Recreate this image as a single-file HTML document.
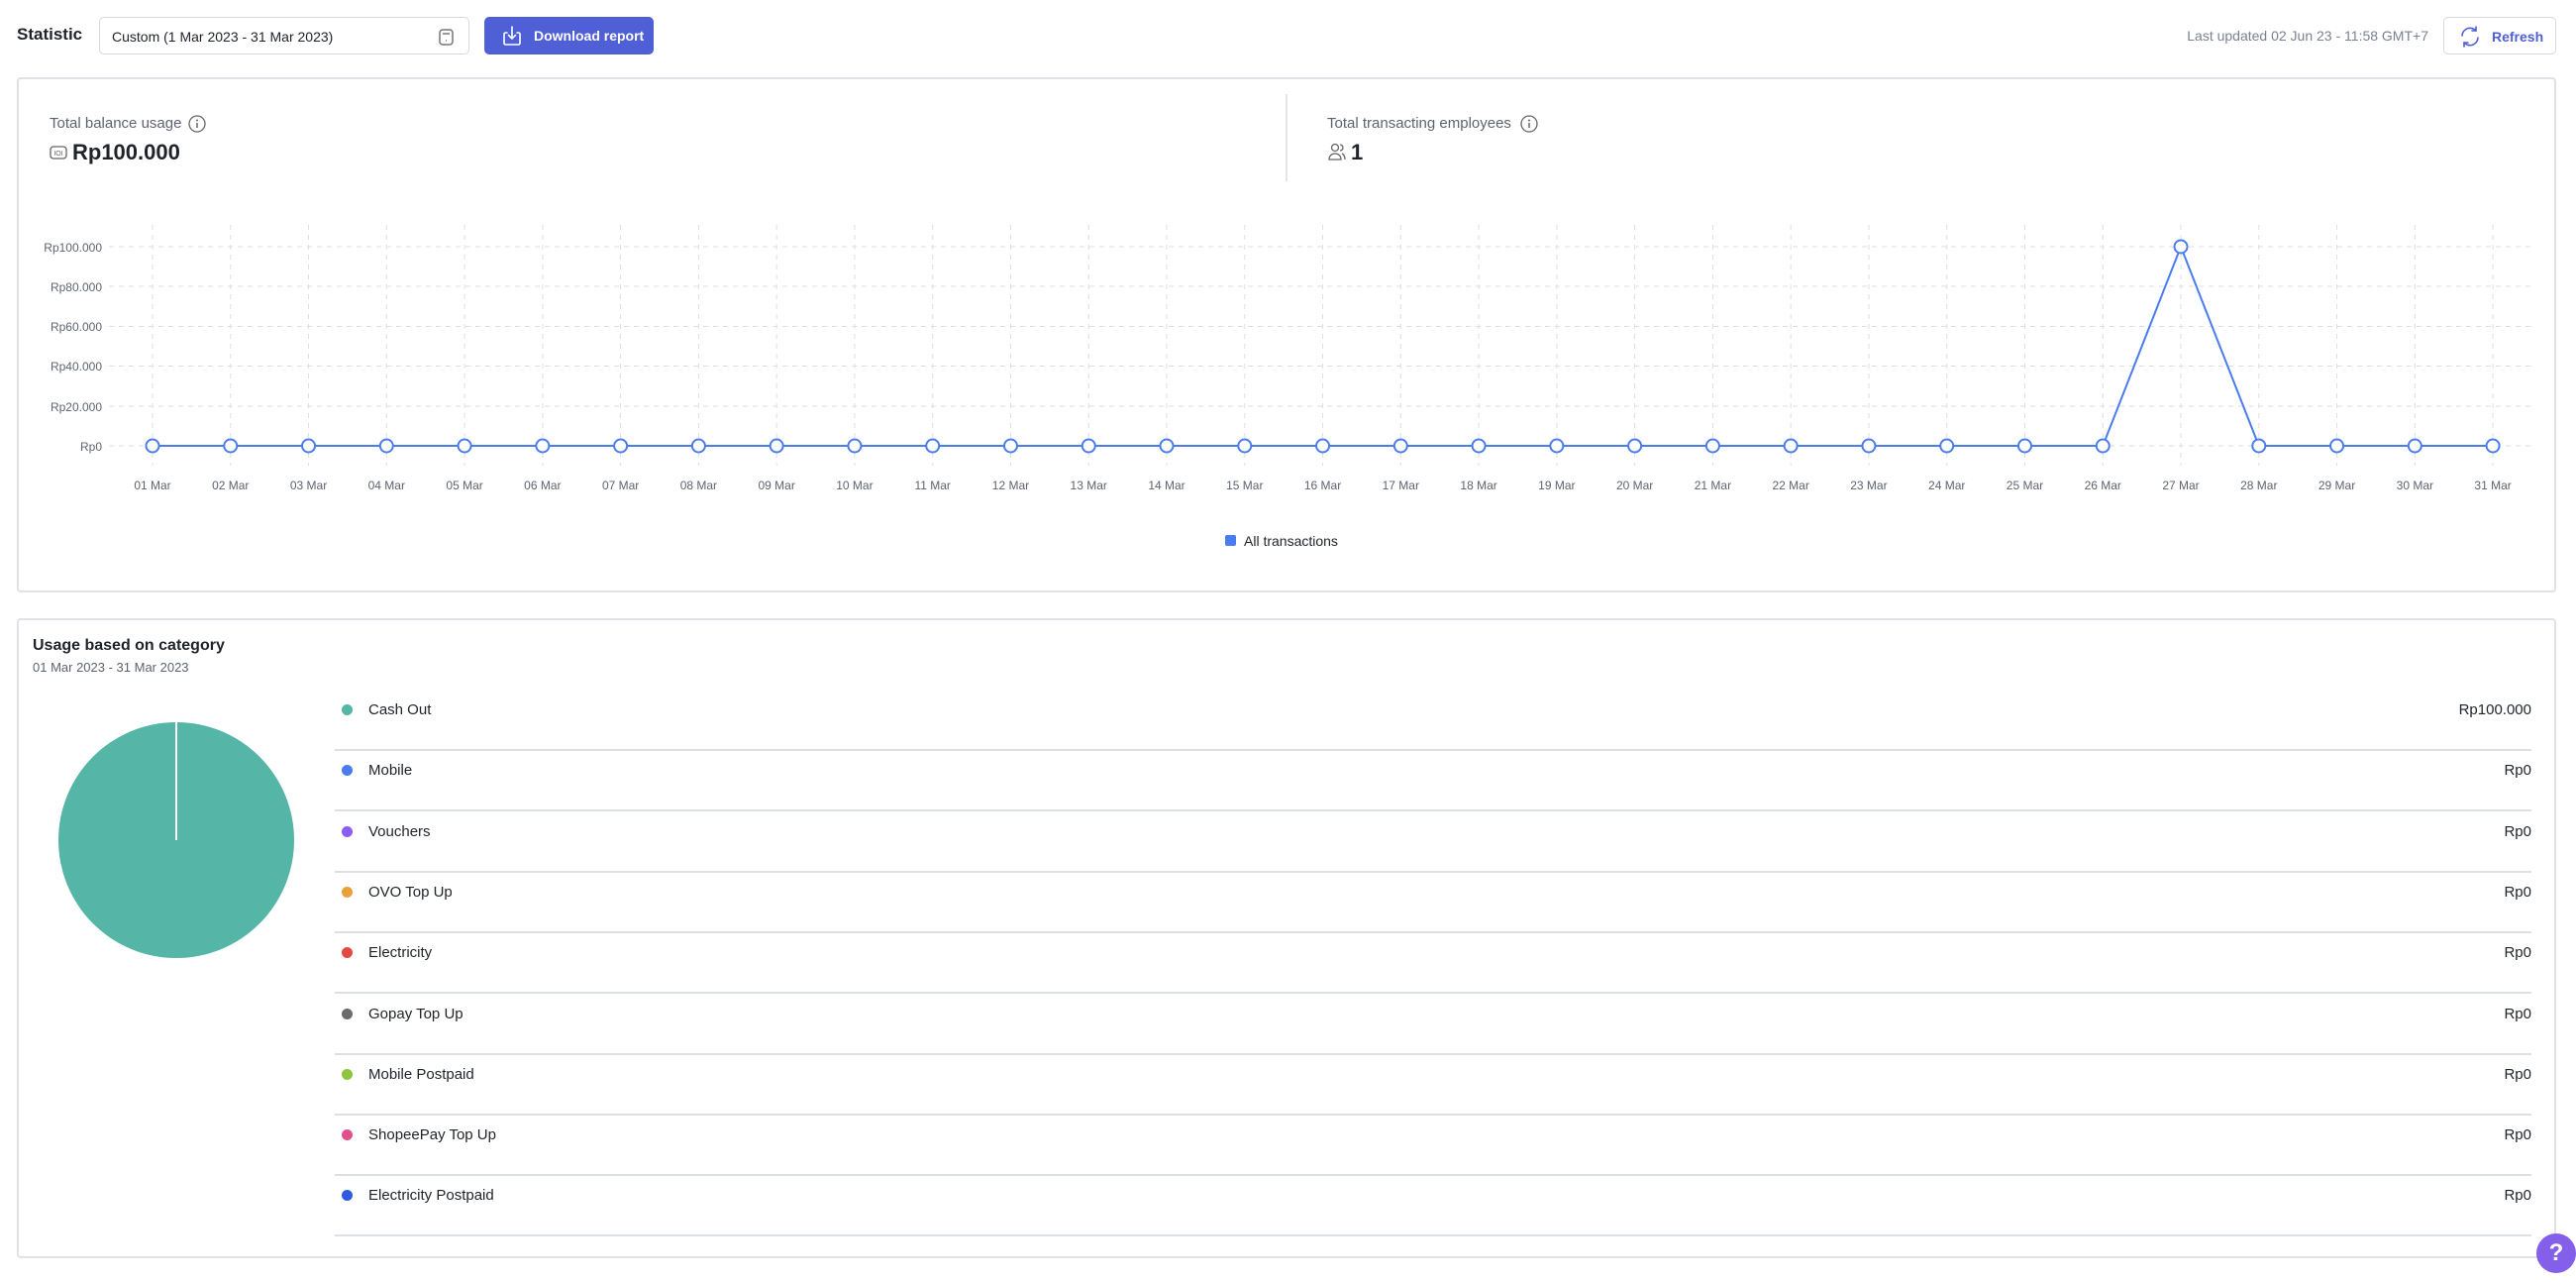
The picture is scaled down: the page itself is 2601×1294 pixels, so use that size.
<!DOCTYPE html>
<html><head><meta charset="utf-8"><style>
*{box-sizing:border-box;margin:0;padding:0}
body{width:2601px;height:1294px;background:#fff;font-family:"Liberation Sans",sans-serif;position:relative;overflow:hidden;color:#1f2329}
.a{position:absolute}
.card{position:absolute;border:2px solid #dfe1e6;border-radius:4px;background:#fff}
</style></head><body>
<div class="a" style="left:17px;top:25px;font-size:17px;font-weight:bold;color:#1f2329">Statistic</div>
<div class="a" style="left:100px;top:17px;width:374px;height:38px;border:1.5px solid #d6d9de;border-radius:5px;font-size:14px;padding:11px 0 0 12px">Custom (1 Mar 2023 - 31 Mar 2023)
<svg class="a" style="left:341px;top:9px" width="18" height="20" viewBox="0 0 18 20"><rect x="2" y="3" width="13" height="15" rx="3" fill="none" stroke="#777" stroke-width="1.5"/><line x1="5" y1="7" x2="12" y2="7" stroke="#777" stroke-width="1.5"/><line x1="8" y1="14" x2="9" y2="14" stroke="#777" stroke-width="1.5"/></svg></div>
<div class="a" style="left:489px;top:17px;width:171px;height:38px;background:#4f5fd6;border-radius:5px;color:#fff;font-size:14px;font-weight:bold;padding:11px 0 0 50px">Download report
<svg class="a" style="left:16px;top:7px" width="24" height="24" viewBox="0 0 24 24" fill="none" stroke="#fff" stroke-width="1.6" stroke-linecap="round"><path d="M7 9H5.5a1.5 1.5 0 0 0-1.5 1.5v9a1.5 1.5 0 0 0 1.5 1.5h13a1.5 1.5 0 0 0 1.5-1.5v-9A1.5 1.5 0 0 0 18.5 9H17"/><path d="M12 3v12M8.5 11.5 12 15l3.5-3.5"/></svg></div>
<div class="a" style="left:2180px;top:28px;width:272px;text-align:right;font-size:14px;color:#7b8190">Last updated 02 Jun 23 - 11:58 GMT+7</div>
<div class="a" style="left:2467px;top:17px;width:114px;height:38px;border:1.5px solid #d6d9de;border-radius:5px;font-size:14px;font-weight:bold;color:#4f5fd6;padding:11px 0 0 48px">Refresh
<svg class="a" style="left:14px;top:7px" width="24" height="24" viewBox="0 0 24 24" fill="none" stroke="#4f5fd6" stroke-width="1.6" stroke-linecap="round"><path d="M4 11a8 8 0 0 1 14-5"/><path d="M18 2v4h-4"/><path d="M20 13a8 8 0 0 1-14 5"/><path d="M6 22v-4h4"/></svg></div>

<div class="card" style="left:17px;top:78px;width:2564px;height:520px"></div>
<div class="a" style="left:50px;top:116px;font-size:15px;color:#5d6370">Total balance usage</div>
<svg class="a" style="left:190px;top:116px" width="18" height="18"><circle cx="9" cy="9" r="8" fill="none" stroke="#666" stroke-width="1.3"/><line x1="9" y1="8" x2="9" y2="13" stroke="#666" stroke-width="1.5"/><circle cx="9" cy="5.5" r="1" fill="#666"/></svg>
<svg class="a" style="left:50px;top:145px" width="18" height="18"><rect x="1" y="3" width="16" height="12" rx="3" fill="none" stroke="#666" stroke-width="1.3"/><text x="9" y="12" font-size="7" text-anchor="middle" fill="#666" font-family="Liberation Sans">IOI</text></svg>
<div class="a" style="left:73px;top:141px;font-size:22px;font-weight:bold;color:#1f2329">Rp100.000</div>
<div class="a" style="left:1298px;top:95px;width:1.5px;height:88px;background:#e3e5e9"></div>
<div class="a" style="left:1340px;top:116px;font-size:15px;color:#5d6370">Total transacting employees</div>
<svg class="a" style="left:1535px;top:116px" width="18" height="18"><circle cx="9" cy="9" r="8" fill="none" stroke="#666" stroke-width="1.3"/><line x1="9" y1="8" x2="9" y2="13" stroke="#666" stroke-width="1.5"/><circle cx="9" cy="5.5" r="1" fill="#666"/></svg>
<svg class="a" style="left:1340px;top:143px" width="20" height="20" fill="none" stroke="#666" stroke-width="1.3"><circle cx="8" cy="6" r="3.5"/><path d="M2 18c0-4 3-6 6-6s6 2 6 6z"/><path d="M13 3a3 3 0 0 1 0 6M15 12c2 1 3 3 3 6"/></svg>
<div class="a" style="left:1364px;top:141px;font-size:22px;font-weight:bold;color:#1f2329">1</div>

<svg class="a" style="left:0;top:0" width="2601" height="600" font-family="Liberation Sans" font-size="12" fill="#5d6370">
<g stroke="#dcdfe4" stroke-dasharray="5,5" stroke-width="1">
<line x1="110" y1="249" x2="2555" y2="249"/><line x1="110" y1="289" x2="2555" y2="289"/><line x1="110" y1="329.5" x2="2555" y2="329.5"/><line x1="110" y1="369.5" x2="2555" y2="369.5"/><line x1="110" y1="410" x2="2555" y2="410"/><line x1="110" y1="450" x2="2555" y2="450"/>
<g id="vg"></g>
</g>
<g text-anchor="end"><text x="103" y="254">Rp100.000</text><text x="103" y="294">Rp80.000</text><text x="103" y="334">Rp60.000</text><text x="103" y="374">Rp40.000</text><text x="103" y="415">Rp20.000</text><text x="103" y="455">Rp0</text></g>
<g id="xg" text-anchor="middle"></g>
<polyline id="pl" fill="none" stroke="#4a7cf0" stroke-width="2" points=""/>
<g id="pts"></g>
<rect x="1237" y="540" width="11" height="11" rx="2" fill="#4a7cf0"/>
<text x="1256" y="551" font-size="14" fill="#1f2329">All transactions</text>
</svg>

<div class="card" style="left:17px;top:624px;width:2564px;height:646px"></div>
<div class="a" style="left:33px;top:643px;font-size:16px;font-weight:bold">Usage based on category</div>
<div class="a" style="left:33px;top:666px;font-size:13px;color:#5d6370">01 Mar 2023 - 31 Mar 2023</div>
<svg class="a" style="left:59px;top:729px" width="240" height="240"><circle cx="119" cy="119" r="119" fill="#55b5a6"/><line x1="119" y1="0" x2="119" y2="119" stroke="#fff" stroke-width="2"/></svg>
<div id="list"></div>

<div class="a" style="left:2561px;top:1245px;width:40px;height:40px;border-radius:50%;background:#8460ea;color:#fff;font-weight:bold;font-size:24px;text-align:center;line-height:40px">?</div>
<script>
var vg=document.getElementById('vg'),xg=document.getElementById('xg'),pts=document.getElementById('pts'),ns='http://www.w3.org/2000/svg',p=[];
for(var i=0;i<31;i++){var x=154+i*78.77,y=(i==26)?249:450;p.push(x+','+y);
var l=document.createElementNS(ns,'line');l.setAttribute('x1',x);l.setAttribute('x2',x);l.setAttribute('y1',227);l.setAttribute('y2',470);vg.appendChild(l);
var t=document.createElementNS(ns,'text');t.setAttribute('x',x);t.setAttribute('y',494);t.textContent=(i<9?'0':'')+(i+1)+' Mar';xg.appendChild(t);
var c=document.createElementNS(ns,'circle');c.setAttribute('cx',x);c.setAttribute('cy',y);c.setAttribute('r',6.5);c.setAttribute('fill','#fff');c.setAttribute('stroke','#4a7cf0');c.setAttribute('stroke-width','2');pts.appendChild(c);}
document.getElementById('pl').setAttribute('points',p.join(' '));
var it=[['Cash Out','#55b5a6','Rp100.000'],['Mobile','#4a7cf0','Rp0'],['Vouchers','#8b5cf6','Rp0'],['OVO Top Up','#e8a03a','Rp0'],['Electricity','#e5483f','Rp0'],['Gopay Top Up','#6b6b6b','Rp0'],['Mobile Postpaid','#8cc63f','Rp0'],['ShopeePay Top Up','#e0508f','Rp0'],['Electricity Postpaid','#2e5be0','Rp0']],h='';
for(var j=0;j<9;j++){var y=717+j*61.3;
h+='<div class="a" style="left:345px;top:'+(y-6)+'px;width:11px;height:11px;border-radius:50%;background:'+it[j][1]+'"></div>';
h+='<div class="a" style="left:372px;top:'+(y-9)+'px;font-size:15px">'+it[j][0]+'</div>';
h+='<div class="a" style="left:2300px;width:256px;text-align:right;top:'+(y-9)+'px;font-size:15px">'+it[j][2]+'</div>';
h+='<div class="a" style="left:338px;top:'+Math.round(y+39)+'px;width:2218px;height:1.5px;background:#dcdfe4"></div>';}
document.getElementById('list').innerHTML=h;
</script>
</body></html>
